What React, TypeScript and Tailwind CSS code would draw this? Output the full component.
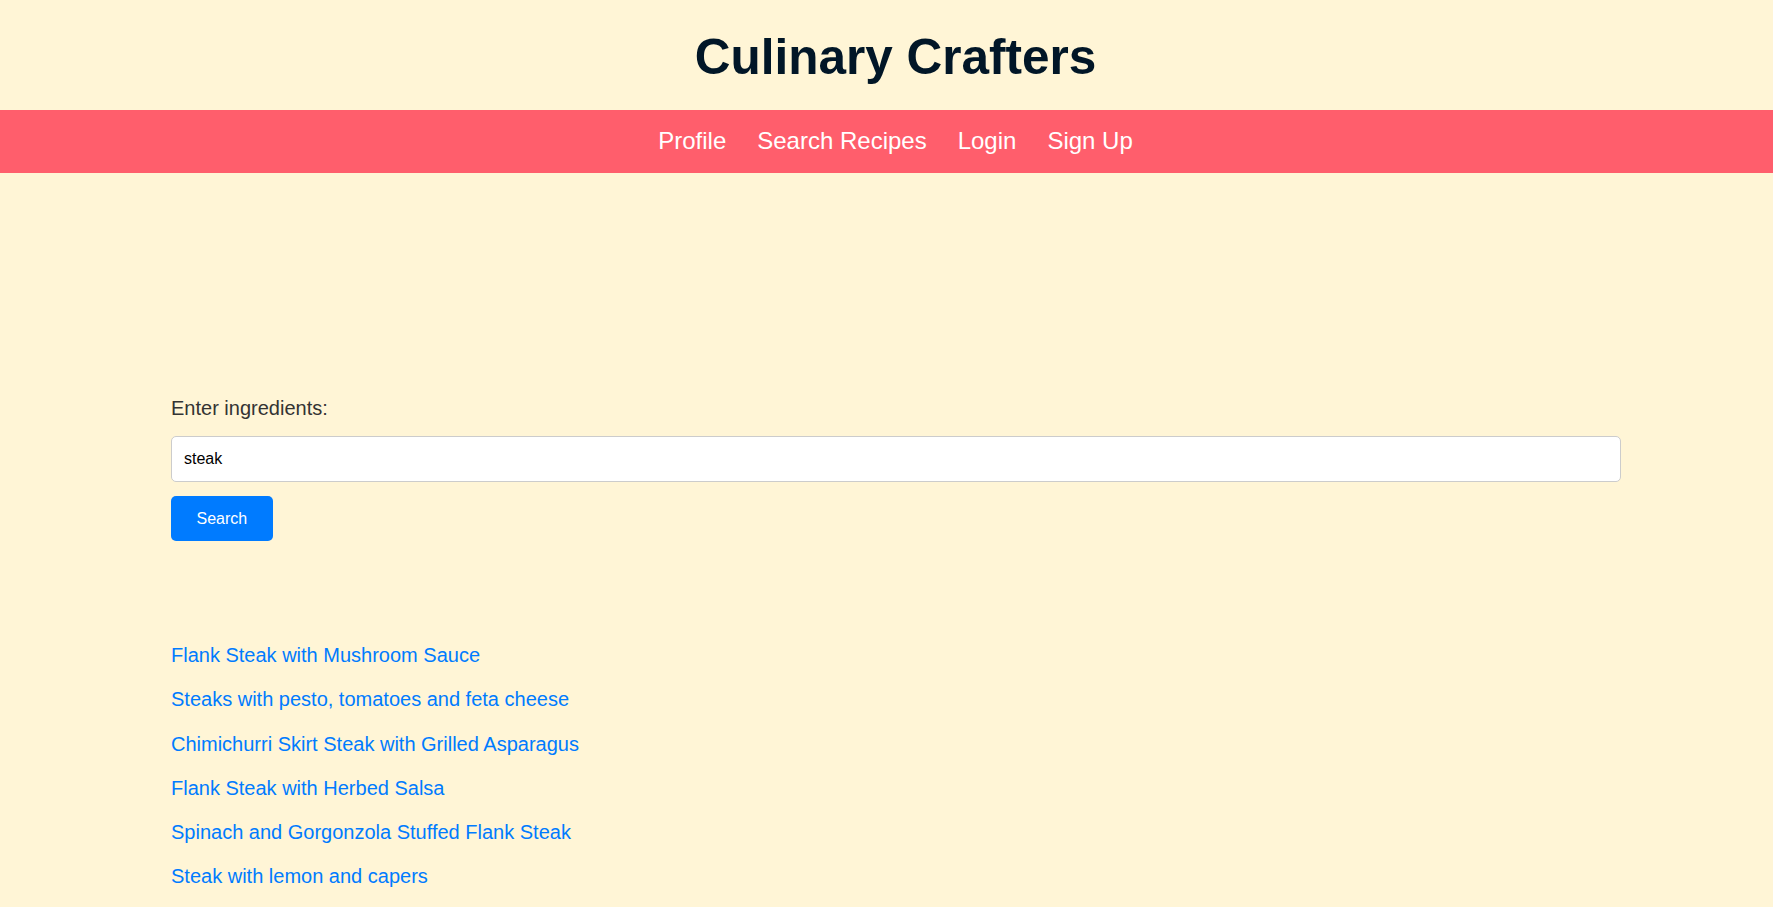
const navLinks = ["Profile", "Search Recipes", "Login", "Sign Up"];

const recipes = [
  "Flank Steak with Mushroom Sauce",
  "Steaks with pesto, tomatoes and feta cheese",
  "Chimichurri Skirt Steak with Grilled Asparagus",
  "Flank Steak with Herbed Salsa",
  "Spinach and Gorgonzola Stuffed Flank Steak",
  "Steak with lemon and capers",
];

export default function App() {
  return (
    <div className="min-h-screen bg-[#fff5d6] font-['Liberation_Sans',Arial,sans-serif]">
      {/* Header */}
      <header className="h-[110px] pl-[18px] pt-[29px] text-center">
        <h1 className="text-[49.5px] font-bold leading-[1.15] text-[#011627]">
          Culinary Crafters
        </h1>
      </header>

      <nav className="flex h-[63px] items-center justify-center gap-[31px] bg-[#ff5e6c] pb-[2px] pl-[18px]">
        {navLinks.map((link) => (
          <a key={link} href="#" className="text-[24px] leading-[1.15] text-white">
            {link}
          </a>
        ))}
      </nav>

      <main className="pl-[171px] pr-[152px] pt-[224px] pb-[20px]">
        <form className="flex flex-col" onSubmit={(e) => e.preventDefault()}>
          <label htmlFor="ingredients" className="text-[20px] leading-[23px] text-[#333]">
            Enter ingredients:
          </label>
          <input
            id="ingredients"
            type="text"
            defaultValue="steak"
            className="mt-[16px] h-[46px] w-full rounded-[5px] border border-[#ccc] bg-white px-[12px] text-[16px] text-black outline-none"
          />
          <div className="mt-[14px]">
            <button
              type="submit"
              className="h-[45px] rounded-[5px] bg-[#007bff] px-[25.5px] text-[16px] text-white"
            >
              Search
            </button>
          </div>
        </form>

        <ul className="mt-[103px] flex flex-col gap-[21.3px]">
          {recipes.map((recipe) => (
            <li key={recipe} className="text-[20px] leading-[23px]">
              <a href="#" className="text-[#007bff]">
                {recipe}
              </a>
            </li>
          ))}
        </ul>
      </main>
    </div>
  );
}
